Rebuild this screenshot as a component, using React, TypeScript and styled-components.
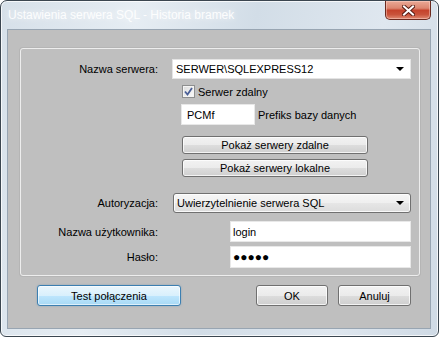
import styled, { createGlobalStyle } from 'styled-components';

const GlobalStyle = createGlobalStyle`
  html, body {
    margin: 0;
    padding: 0;
    background: #ffffff;
  }
  body {
    font-family: "Liberation Sans", Arial, sans-serif;
    font-size: 11px;
    color: #000;
  }
`;

const Window = styled.div`
  box-sizing: border-box;
  width: 439px;
  height: 337px;
  border: 1px solid #3b4650;
  border-radius: 7px 7px 6px 6px;
  background: linear-gradient(100deg, #d6e0e9 0%, #e6edf3 28%, #d2dde7 52%, #dfe7ef 78%, #cfdae5 100%);
  box-shadow: inset 0 0 0 1px rgba(255, 255, 255, 0.75);
  padding: 0 7px 7px 6px;
  display: flex;
  flex-direction: column;
  overflow: hidden;
`;

const TitleBar = styled.div`
  height: 28px;
  display: flex;
  justify-content: space-between;
  align-items: flex-start;
  flex-shrink: 0;
`;

const Title = styled.div`
  align-self: center;
  padding-left: 1px;
  font-family: "Liberation Sans", Arial, sans-serif;
  font-size: 12px;
  color: rgba(255, 255, 255, 0.92);
  text-shadow: 0 0 6px rgba(255, 255, 255, 0.9);
`;

const CloseButton = styled.div`
  width: 46px;
  height: 19px;
  box-sizing: border-box;
  border: 1px solid #6b2a1f;
  border-top: none;
  border-radius: 0 0 5px 5px;
  background: linear-gradient(#eaa996 0%, #dc8670 40%, #c5432c 52%, #c9533b 75%, #e08a72 100%);
  box-shadow: inset 0 0 0 1px rgba(255, 220, 210, 0.45);
  display: flex;
  align-items: center;
  justify-content: center;
`;

const Client = styled.div`
  flex: 1;
  background: #bfbfbf;
  border: 1px solid #98a5b2;
  padding: 18px 10px 0 12px;
  display: flex;
  flex-direction: column;
`;

const Group = styled.div`
  box-sizing: border-box;
  height: 228px;
  border: 1px solid #ededed;
  border-radius: 3px;
  box-shadow: 0 0 0 1px rgba(150, 150, 150, 0.25);
  padding: 10px 8px 0 0;
  display: flex;
  flex-direction: column;
`;

const Row = styled.div<{ $mt?: number }>`
  display: grid;
  grid-template-columns: 137px 1fr;
  column-gap: 14px;
  align-items: center;
  margin-top: ${(p) => p.$mt ?? 0}px;
`;

const Label = styled.div`
  text-align: right;
  white-space: nowrap;
`;

const Cell = styled.div<{ $indent?: number }>`
  grid-column: 2;
  margin-left: ${(p) => p.$indent ?? 0}px;
  display: flex;
  align-items: center;
`;

const Combo = styled.div<{ $flat?: boolean }>`
  flex: 1;
  box-sizing: border-box;
  height: 20px;
  display: flex;
  align-items: center;
  justify-content: space-between;
  padding: 0 6px 0 ${(p) => (p.$flat ? 3 : 3)}px;
  ${(p) =>
    p.$flat
      ? `background: #ffffff; border: 1px solid #e4e4e4;`
      : `background: linear-gradient(#f6f6f6 0%, #efefef 50%, #e6e6e6 51%, #dcdcdc 100%);
         border: 1px solid #707070;
         border-radius: 3px;
         box-shadow: inset 0 0 0 1px rgba(255,255,255,0.8);`}
`;

const Arrow = styled.span`
  width: 0;
  height: 0;
  border-left: 4px solid transparent;
  border-right: 4px solid transparent;
  border-top: 4px solid #000;
`;

const CheckRow = styled.label`
  display: flex;
  align-items: center;
  gap: 3px;
`;

const CheckBox = styled.span`
  box-sizing: border-box;
  width: 13px;
  height: 13px;
  border: 1px solid #8e8f8f;
  background: linear-gradient(135deg, #dcdcdc, #fbfbfb);
  box-shadow: inset 0 0 0 1px #f4f4f4;
  display: flex;
  align-items: center;
  justify-content: center;
`;

const TextField = styled.div<{ $width?: number; $height: number; $pad: number }>`
  box-sizing: border-box;
  ${(p) => (p.$width ? `width: ${p.$width}px;` : 'flex: 1;')}
  height: ${(p) => p.$height}px;
  background: #ffffff;
  border: 1px solid #e8e8e8;
  padding-left: ${(p) => p.$pad}px;
  display: flex;
  align-items: center;
`;

const Side = styled.span`
  margin-left: 3px;
`;

const Dots = styled.span`
  font-size: 12px;
  letter-spacing: 0px;
  line-height: 1;
`;

const Button = styled.div<{ $width: number; $default?: boolean }>`
  box-sizing: border-box;
  width: ${(p) => p.$width}px;
  height: 18px;
  border-radius: 3px;
  display: flex;
  align-items: center;
  justify-content: center;
  ${(p) =>
    p.$default
      ? `height: 21px;
         border: 1px solid #3c7fb1;
         background: linear-gradient(#eaf6fd 0%, #d9f0fc 50%, #bee6fd 51%, #a7d9f5 100%);
         box-shadow: inset 0 0 0 1px rgba(255,255,255,0.6), 0 0 2px rgba(60,127,177,0.4);`
      : `border: 1px solid #707070;
         background: linear-gradient(#f2f2f2 0%, #ebebeb 50%, #dddddd 51%, #cfcfcf 100%);
         box-shadow: inset 0 0 0 1px rgba(255,255,255,0.75);`}
`;

const ButtonBar = styled.div`
  margin-top: 9px;
  padding: 0 9px 0 17px;
  display: flex;
  justify-content: space-between;
`;

const ButtonGroup = styled.div`
  display: flex;
  gap: 10px;
`;

const DialogButton = styled(Button)`
  height: 21px;
`;

function CloseIcon() {
  return (
    <svg width="13" height="11" viewBox="0 0 13 11">
      <path d="M2 1.5 L11 9.5 M11 1.5 L2 9.5" stroke="#5a1e15" strokeWidth="4" strokeLinecap="square" />
      <path d="M2 1.5 L11 9.5 M11 1.5 L2 9.5" stroke="#ffffff" strokeWidth="2" strokeLinecap="square" />
    </svg>
  );
}

function CheckIcon() {
  return (
    <svg width="9" height="9" viewBox="0 0 9 9">
      <path d="M1 4.5 L3.5 7.5 L8 1" stroke="#4a5f97" strokeWidth="1.8" fill="none" />
    </svg>
  );
}

export default function App() {
  return (
    <>
      <GlobalStyle />
      <Window>
        <TitleBar>
          <Title>Ustawienia serwera SQL - Historia bramek</Title>
          <CloseButton>
            <CloseIcon />
          </CloseButton>
        </TitleBar>
        <Client>
          <Group>
            <Row>
              <Label>Nazwa serwera:</Label>
              <Cell>
                <Combo $flat>
                  <span>SERWER\SQLEXPRESS12</span>
                  <Arrow />
                </Combo>
              </Cell>
            </Row>
            <Row $mt={6}>
              <Cell $indent={10}>
                <CheckRow>
                  <CheckBox>
                    <CheckIcon />
                  </CheckBox>
                  Serwer zdalny
                </CheckRow>
              </Cell>
            </Row>
            <Row $mt={6}>
              <Cell $indent={9}>
                <TextField $width={74} $height={21} $pad={5}>PCMf</TextField>
                <Side>Prefiks bazy danych</Side>
              </Cell>
            </Row>
            <Row $mt={11}>
              <Cell $indent={10}>
                <Button $width={186}>Pokaż serwery zdalne</Button>
              </Cell>
            </Row>
            <Row $mt={5}>
              <Cell $indent={10}>
                <Button $width={186}>Pokaż serwery lokalne</Button>
              </Cell>
            </Row>
            <Row $mt={16}>
              <Label>Autoryzacja:</Label>
              <Cell $indent={1}>
                <Combo>
                  <span>Uwierzytelnienie serwera SQL</span>
                  <Arrow />
                </Combo>
              </Cell>
            </Row>
            <Row $mt={8}>
              <Label>Nazwa użytkownika:</Label>
              <Cell $indent={58}>
                <TextField $height={21} $pad={2}>login</TextField>
              </Cell>
            </Row>
            <Row $mt={4}>
              <Label>Hasło:</Label>
              <Cell $indent={58}>
                <TextField $height={22} $pad={2}>
                  <Dots>●●●●●</Dots>
                </TextField>
              </Cell>
            </Row>
          </Group>
          <ButtonBar>
            <Button $width={144} $default>Test połączenia</Button>
            <ButtonGroup>
              <DialogButton $width={72}>OK</DialogButton>
              <DialogButton $width={73}>Anuluj</DialogButton>
            </ButtonGroup>
          </ButtonBar>
        </Client>
      </Window>
    </>
  );
}
